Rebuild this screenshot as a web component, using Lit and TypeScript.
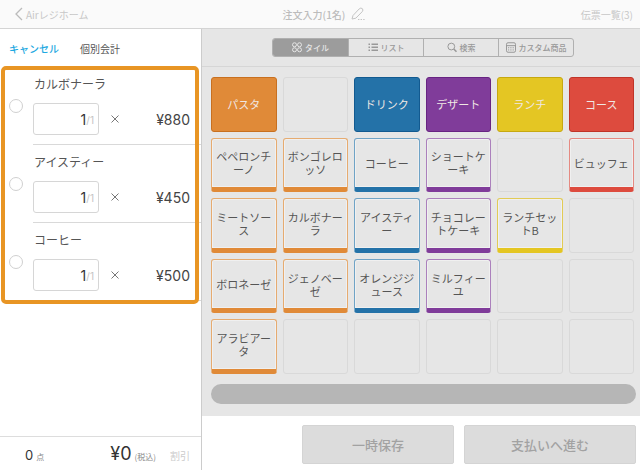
import { LitElement, html, css, svg } from "lit";
import { customElement, property } from "lit/decorators.js";
import { classMap } from "lit/directives/class-map.js";

type Tile = { label: string; color: string; head?: boolean } | null;

const head = (label: string, color: string): Tile => ({ label, color, head: true });
const item = (label: string, color: string): Tile => ({ label, color });

const TILES: Tile[] = [
  head("パスタ", "orange"), null, head("ドリンク", "blue"), head("デザート", "purple"), head("ランチ", "yellow"), head("コース", "red"),
  item("ペペロンチーノ", "orange"), item("ボンゴレロッソ", "orange"), item("コーヒー", "blue"), item("ショートケーキ", "purple"), null, item("ビュッフェ", "red"),
  item("ミートソース", "orange"), item("カルボナーラ", "orange"), item("アイスティー", "blue"), item("チョコレートケーキ", "purple"), item("ランチセットB", "yellow"), null,
  item("ボロネーゼ", "orange"), item("ジェノベーゼ", "orange"), item("オレンジジュース", "blue"), item("ミルフィーユ", "purple"), null, null,
  item("アラビアータ", "orange"), null, null, null, null, null,
];

const ORDER = [
  { name: "カルボナーラ", qty: 1, price: 880 },
  { name: "アイスティー", qty: 1, price: 450 },
  { name: "コーヒー", qty: 1, price: 500 },
];

const ICONS = {
  tile: svg`<circle cx="2.5" cy="2.5" r="2"/><circle cx="7.5" cy="2.5" r="2"/><circle cx="2.5" cy="7.5" r="2"/><circle cx="7.5" cy="7.5" r="2"/>`,
  list: svg`<path d="M3.5 2H10M3.5 5H10M3.5 8H10M.5 2H2M.5 5H2M.5 8H2" stroke-width="1.3"/>`,
  search: svg`<circle cx="4.3" cy="4.3" r="3.4"/><path d="M6.8 6.8L9.5 9.5" stroke-width="1.6"/>`,
  custom: svg`<rect x=".5" y=".5" width="9" height="9.5" rx="1.5"/><path d="M.5 3.4H9.5"/><path d="M2 5.5H8M2 7.7H8" stroke-dasharray="1.2 1.1"/>`,
};

const MODES: { icon: keyof typeof ICONS; label: string }[] = [
  { icon: "tile", label: "タイル" },
  { icon: "list", label: "リスト" },
  { icon: "search", label: "検索" },
  { icon: "custom", label: "カスタム商品" },
];

const base = css`
  * { box-sizing: border-box; margin: 0; }
  button, input { font: inherit; color: inherit; border: 0; padding: 0; background: none; }
  button { white-space: nowrap; }
`;

@customElement("order-line")
class OrderLine extends LitElement {
  @property() name = "";
  @property({ type: Number }) qty = 1;
  @property({ type: Number }) price = 0;

  static styles = [base, css`
    :host { display: grid; grid-template-columns: 33px 1fr; height: 78px; }
    .pick { display: flex; align-items: center; padding-left: 9px; }
    .tick { appearance: none; width: 14px; height: 14px; border: 1px solid #d0d0d0; border-radius: 50%; background: #fff; }
    .body { border-bottom: 1px solid #d9d9d9; padding-top: 7px; }
    .name { display: block; padding-left: 1px; font-size: 12px; line-height: 20px; color: #555; }
    .row { display: flex; align-items: center; height: 32px; margin-top: 9px; padding-right: 11px; font-family: Inter, "Noto Sans CJK JP", sans-serif; }
    .qty { display: flex; align-items: center; width: 66px; height: 32px; padding-right: 4px; border: 1px solid #d6d6d6; border-radius: 3px; }
    .num { flex: 1; min-width: 0; text-align: right; font-size: 14px; color: #333; }
    .max { font-size: 10px; color: #c4c4c4; padding-top: 2px; }
    .times { width: 8px; height: 8px; margin-left: 12px; fill: none; stroke: #777; }
    .price { flex: 1; text-align: right; font-size: 14px; color: #444; }
  `];

  render() {
    return html`
      <div class="pick"><input class="tick" type="checkbox" aria-label=${this.name} /></div>
      <div class="body">
        <label class="name" for="qty">${this.name}</label>
        <div class="row">
          <span class="qty"><input id="qty" class="num" type="text" inputmode="numeric" .value=${String(this.qty)} /><span class="max">/${this.qty}</span></span>
          <svg class="times" viewBox="0 0 8 8"><path d="M.5 .5L7.5 7.5M7.5 .5L.5 7.5" /></svg>
          <span class="price">¥${this.price}</span>
        </div>
      </div>
    `;
  }
}

@customElement("app-root")
class AppRoot extends LitElement {
  static styles = [base, css`
    :host {
      display: grid; grid-template-rows: 29px 1fr; min-height: 100vh;
      font-family: "Noto Sans CJK JP", sans-serif; font-size: 10px; color: #555; background: #fff;
    }
    .top {
      display: grid; grid-template-columns: 1fr auto 1fr; align-items: center;
      padding: 0 7px 0 15px; background: #fafafa; border-bottom: 1px solid #d4d4d4; color: #c8c8c8;
    }
    .home { display: flex; align-items: center; gap: 3px; color: inherit; text-decoration: none; }
    .chevron { width: 8px; height: 14px; fill: none; stroke: #bbb; stroke-width: 1.3; }
    .title { display: flex; align-items: center; gap: 6px; font-size: 10px; font-weight: 500; color: #bcbcbc; }
    .pencil { width: 14px; height: 14px; display: block; fill: none; stroke: #c4c4c4; }
    .slips { justify-self: end; color: inherit; text-decoration: none; }

    .main { display: grid; grid-template-columns: 202px 1fr; }
    .side { display: flex; flex-direction: column; border-right: 1px solid #ccc; }
    .tabs { display: flex; align-items: center; gap: 21px; height: 38px; padding-left: 9px; }
    .cancel { color: #1fa9e1; font-weight: 500; }
    .lines { position: relative; flex: 1; }
    .marker { position: absolute; inset: -1px 2px auto 1px; height: 238px; border: 4px solid #e89524; border-radius: 5px; pointer-events: none; }
    .sum { display: flex; align-items: baseline; height: 34px; padding: 3px 11px 0 25px; border-top: 1px solid #ddd; line-height: 28px; white-space: nowrap; }
    .count { flex: 1; font-size: 8px; color: #888; }
    .figure { font-family: Inter, sans-serif; font-size: 13px; color: #333; margin-right: 3px; }
    .total { font-family: Inter, sans-serif; font-size: 18px; color: #333; margin-right: 3px; }
    .tax { font-size: 8px; color: #888; margin-right: 14px; }
    .off { color: #ccc; }

    .work { display: flex; flex-direction: column; }
    .bar { display: flex; justify-content: center; align-items: center; height: 38px; padding-left: 4px; background: #e6e6e6; border-bottom: 1px solid #d6d6d6; }
    .modes { display: grid; grid-template-columns: repeat(4, 75px); border: 1px solid #b0b0b0; border-radius: 3px; overflow: hidden; }
    .mode { display: flex; align-items: center; justify-content: center; gap: 3px; height: 17px; font-size: 8px; font-weight: 500; color: #999; }
    .mode + .mode { border-left: 1px solid #b0b0b0; }
    .mode.on { background: #9c9c9c; color: #e6e6e6; }
    .glyph { width: 10px; height: 11px; fill: none; stroke: currentColor; overflow: visible; }
    .board { display: flex; flex-direction: column; flex: 1; gap: 10px; padding: 10px 4px 12px 9px; background: #e6e6e6; }
    .tiles { flex: 1; display: grid; grid-template-columns: repeat(6, 1fr); grid-auto-rows: 1fr; gap: 6px; padding-right: 2px; }
    .tile {
      display: flex; align-items: center; justify-content: center; padding: 1px 4px 0; border: 1px solid var(--edge);
      border-bottom: 5px solid var(--fill); border-radius: 3px; box-shadow: inset 0 0 0 1px #f0f0f0;
      font-size: 11px; line-height: 13px; white-space: normal; line-break: anywhere; text-align: center; color: #555;
    }
    .tile.head { background: var(--fill); border: 1px solid var(--dark); padding: 0; box-shadow: none; color: #f0e8e4; }
    .empty { border: 1px solid #d9d9d9; border-radius: 3px; }
    .orange { --fill: #e08a38; --edge: #e6ab70; --dark: #c87020; }
    .blue { --fill: #2472a8; --edge: #6fa3c6; --dark: #125a90; }
    .purple { --fill: #803c9a; --edge: #ab80bc; --dark: #682482; }
    .yellow { --fill: #e4c623; --edge: #e2cb55; --dark: #c6a810; }
    .red { --fill: #dd4b3e; --edge: #e58a82; --dark: #c03428; }
    .scroll { height: 20px; border-radius: 10px; background: #b6b6b6; }
    .actions { display: grid; grid-template-columns: 152px 172px; justify-content: end; align-items: center; gap: 10px; height: 54px; padding: 3px 4px 0 0; }
    .act { height: 39px; border: 1px solid #d4d4d4; border-radius: 2px; background: #dcdcdc; font-size: 13px; font-weight: 500; color: #a2a2a2; }
  `];

  render() {
    return html`
      <header class="top">
        <a class="home" href="#home">
          <svg class="chevron" viewBox="0 0 8 14"><path d="M7 1L1 7L7 13" /></svg>Airレジホーム
        </a>
        <h1 class="title">注文入力(1名)
          <svg class="pencil" viewBox="0 0 14 14"><path d="M1 12L2 8.5L8.2 1.9Q9.8 .4 11.3 1.6Q12.6 3 11.3 4.6L4.8 11.2Z" /><path d="M7 12.5H14" stroke-dasharray="1.4 1.2" /></svg>
        </h1>
        <a class="slips" href="#slips">伝票一覧(3)</a>
      </header>
      <div class="main">
        <aside class="side">
          <nav class="tabs"><button class="cancel">キャンセル</button><button>個別会計</button></nav>
          <div class="lines">
            ${ORDER.map((o) => html`<order-line .name=${o.name} .qty=${o.qty} .price=${o.price}></order-line>`)}
            <div class="marker"></div>
          </div>
          <footer class="sum">
            <span class="count"><span class="figure">0</span>点</span>
            <span class="total">¥0</span><span class="tax">(税込)</span><button class="off" disabled>割引</button>
          </footer>
        </aside>
        <main class="work">
          <div class="bar">
            <div class="modes">
              ${MODES.map((m, i) => html`<button class=${classMap({ mode: true, on: i === 0 })} aria-pressed=${i === 0}>
                <svg class="glyph" viewBox="0 0 10 10.5">${ICONS[m.icon]}</svg>${m.label}</button>`)}
            </div>
          </div>
          <div class="board">
            <div class="tiles">
              ${TILES.map((t) => t
                ? html`<button class=${classMap({ tile: true, head: !!t.head, [t.color]: true })}>${t.label}</button>`
                : html`<div class="empty"></div>`)}
            </div>
            <div class="scroll"></div>
          </div>
          <div class="actions">
            <button class="act" disabled>一時保存</button>
            <button class="act" disabled>支払いへ進む</button>
          </div>
        </main>
      </div>
    `;
  }
}
